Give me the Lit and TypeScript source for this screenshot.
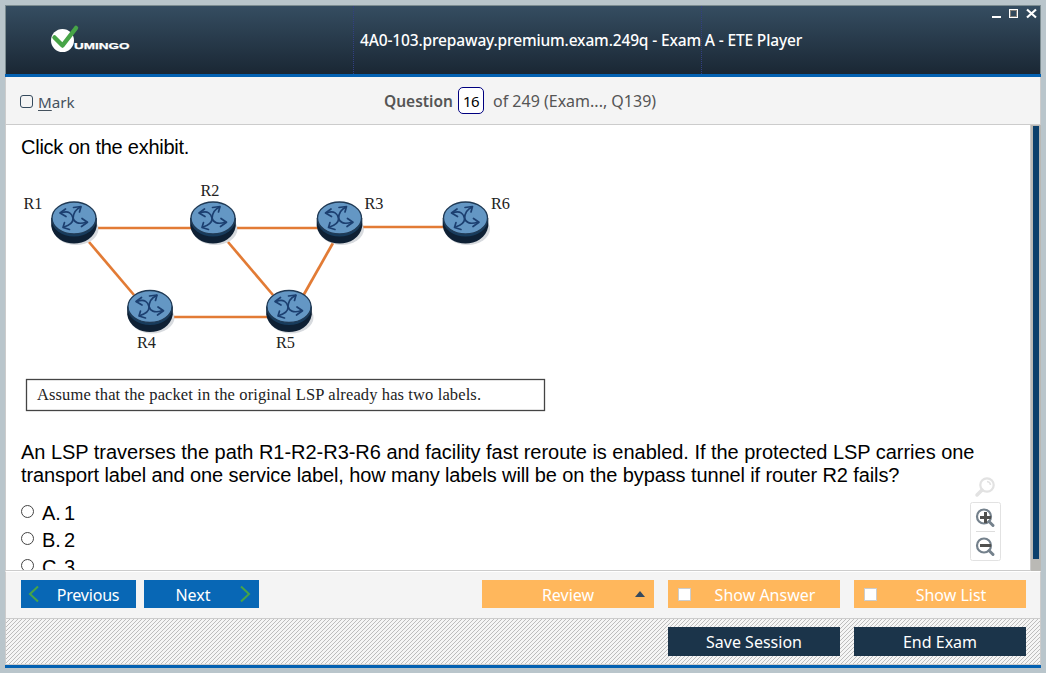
import { LitElement, html, svg, css } from "lit";
import { customElement } from "lit/decorators.js";

const routers = [
  { name: "R1", x: 74, y: 218, lx: 23.5, ly: 209 },
  { name: "R2", x: 213, y: 218, lx: 200.5, ly: 196 },
  { name: "R3", x: 339.5, y: 218, lx: 364.5, ly: 209 },
  { name: "R6", x: 465.5, y: 218, lx: 491, ly: 209 },
  { name: "R4", x: 150, y: 306.5, lx: 137, ly: 348 },
  { name: "R5", x: 289, y: 306.5, lx: 276, ly: 348 },
];

const links = [
  [98, 228, 192, 228],
  [237, 228, 318, 228],
  [363, 227, 444, 227],
  [89, 242, 134, 295],
  [228, 242, 273, 295],
  [333, 243, 303, 296],
  [174, 317, 268, 317],
];

const options = [
  { key: "A.", value: "1" },
  { key: "B.", value: "2" },
  { key: "C.", value: "3" },
];

@customElement("exam-exhibit")
class ExamExhibit extends LitElement {
  static styles = css`
    :host { display: block; height: 282px; }
    svg { display: block; }
    .label { font: 16.500px "Liberation Serif", serif; fill: #222; }
    .note { font: 16.500px "Liberation Serif", serif; fill: #222; }
    .link { stroke: #e27b35; stroke-width: 2.7; }
  `;

  router(r: { name: string; x: number; y: number; lx: number; ly: number }) {
    return svg`
      <g transform="translate(${r.x} ${r.y})">
        <ellipse cx="2" cy="11" rx="22.5" ry="16" fill="#bcc1c8" opacity=".6"></ellipse>
        <path d="M-22.800 0V8C-21 20-10 25.500 0 25.500S21 20 22.800 8V0Z" fill="#0e2034"></path>
        <ellipse cx="0" cy="1.500" rx="22.500" ry="17" fill="#173b5c"></ellipse>
        <ellipse cx="0" cy="0" rx="22" ry="16" fill="#6497c4" stroke="#203a55" stroke-width="1.3"></ellipse>
        <g fill="none" stroke="#1c3f70" stroke-width="1.7" stroke-linecap="round" stroke-linejoin="round">
          <path d="M-13-5C-5-8-2-4-1 0S4 7 12.500 4"></path>
          <path d="M6.500-11C0-8-1-3-1 1S-4 7-10 9"></path>
          <path d="M-8.500-9L-14-5L-8-1.500M-.500-10.500L7-11.500L5.500-6M8 .500L13.500 4.300L7.500 8.500M-9.500 4.500L-11 9.500L-4.500 11.500"></path>
        </g>
      </g>
      <text class="label" x=${r.lx} y=${r.ly} textLength="19" lengthAdjust="spacingAndGlyphs">${r.name}</text>`;
  }

  render() {
    return html`<svg width="540" height="282" viewBox="21 159 540 282">
      ${links.map(([a, b, c, d]) => svg`<line class="link" x1=${a} y1=${b} x2=${c} y2=${d}></line>`)}
      ${routers.map((r) => this.router(r))}
      <rect x="26.500" y="379.500" width="518" height="31" fill="#fff" stroke="#444" stroke-width="1.3"></rect>
      <text class="note" x="37" y="400" textLength="444">Assume that the packet in the original LSP already has two labels.</text>
    </svg>`;
  }
}

@customElement("app-root")
class AppRoot extends LitElement {
  static styles = css`
    :host { display: block; box-sizing: border-box; height: 673px; padding: 5px; background: #b9c5cb; font-family: "Noto Sans", sans-serif; overflow: hidden; }
    * { box-sizing: border-box; }
    .window { width: 1036px; height: 663px; display: flex; flex-direction: column; background: #fff; }
    .header { position: relative; height: 69px; border: 1px solid #7c8c91; border-bottom: 0; background: linear-gradient(#354d61, #1a2734); display: grid; grid-template-columns: 348px 348px 1fr; }
    .cell { border-right: 1px dotted #323f83; }
    .cell:last-child, .last { border: 0; }
    .logo { display: block; margin: 18px 0 0 42px; }
    .brand { font: bold 9.800px "Liberation Sans", sans-serif; fill: #fff; stroke: #fff; stroke-width: .25; }
    .title { position: absolute; left: 354px; top: 22px; line-height: 24px; font-size: 15.500px; letter-spacing: -.145px; color: #fff; white-space: nowrap; font-weight: 500; }
    .controls { position: absolute; right: 2px; top: 2px; }
    .rule { height: 3px; background: #0361b2; flex: none; }
    .topbar { height: 48px; background: #f4f4f4; border: 1px solid #ccc; border-top: 0; display: flex; align-items: center; color: #555; font-size: 16px; white-space: nowrap; }
    .check { width: 13px; height: 13px; border: 1px solid #34495c; border-radius: 3px; margin: 2px 5px 0 14px; }
    .mark { width: 346px; color: #44515d; font-size: 15.200px; padding-top: 3px; }
    .mark u { text-underline-offset: 2px; text-decoration-thickness: 1px; }
    .question { font-weight: 600; font-size: 15.500px; width: 74px; }
    .number { width: 26px; height: 27px; border: 1px solid #000080; border-radius: 5px; background: #fff; color: #000; font-size: 15px; letter-spacing: -.5px; text-align: center; line-height: 27px; margin-right: 9px; }
    .body { position: relative; height: 446px; display: flex; border-left: 1px solid #ccc; border-bottom: 1px solid #ccc; }
    .content { flex: 1; height: 445px; overflow: hidden; padding: 11px 0 0 15px; font: 20px/23px "Liberation Sans", Arial, sans-serif; color: #000; white-space: nowrap; }
    .line { height: 23px; }
    .intro { letter-spacing: -.25px; }
    .l1 { letter-spacing: -.028px; }
    .l2 { letter-spacing: -.107px; }
    .options { padding-top: 12px; }
    .option { display: flex; height: 27px; line-height: 28px; align-items: center; }
    .radio { width: 13px; height: 13px; border: 1px solid #444; border-radius: 50%; margin: 0 8px 3px 0; }
    .key { width: 22px; }
    .scroll { width: 11px; height: 446px; background: #bab9b5; border-left: 1px solid #ccc; padding: 1px 2px 0; }
    .thumb { height: 433px; background: #0c406c; }
    .tools { position: absolute; left: 964px; top: 350px; }
    .actions { height: 48px; border: 1px solid #ccc; border-top: 1px solid #fff; background: #f4f4f4; display: flex; padding: 8px 14px 0 15px; }
    .btn { height: 28px; padding-top: 2px; line-height: 28px; color: #fff; font-size: 16px; text-align: center; position: relative; display: flex; align-items: center; justify-content: center; white-space: nowrap; }
    .nav { width: 115px; background: #0867b5; margin-right: 8px; }
    .prev { padding-left: 19px; letter-spacing: -.2px; }
    .next { padding-right: 17px; }
    .chev { position: absolute; top: 5px; }
    .prev .chev { left: 7px; }
    .next .chev { right: 8px; }
    .wide { width: 172px; background: #ffb75c; margin-left: 14px; }
    .review { margin-left: auto; }
    .box { position: absolute; left: 10px; top: 8px; width: 13px; height: 13px; background: #fff; border: 1px solid #ccc; }
    .tri { position: absolute; right: 9px; top: 11px; border: 5px solid transparent; border-top: 0; border-bottom: 6px solid #34495e; }
    .shift { padding-left: 22px; }
    .bottom { height: 46px; border-left: 1px solid #ccc; border-right: 1px solid #ccc; border-bottom: 1px solid #ccc; background: linear-gradient(135deg, #f5f5f5 44%, #bdbdbd 44% 56%, #f5f5f5 56%) 0 0 / 4px 4px; display: flex; justify-content: flex-end; padding: 8px 14px 0; }
    .dark { height: 29px; background: #1b344a; padding-top: 1px; }
  `;

  render() {
    return html`<div class="window">
      <div class="header">
        <div class="cell">
          <svg class="logo" width="90" height="32" viewBox="48 24 90 32">
            <circle cx="62.500" cy="40.500" r="11.500" fill="#fff"></circle>
            <path d="M54.500 37.500L62.500 45.500L76 28" fill="none" stroke="#47a447" stroke-width="4.500" stroke-linecap="round" stroke-linejoin="round"></path>
            <text class="brand" x="74" y="49" textLength="55.500" lengthAdjust="spacingAndGlyphs">UMINGO</text>
          </svg>
        </div>
        <div class="cell"></div>
        <div class="cell last"></div>
        <div class="title">4A0-103.prepaway.premium.exam.249q - Exam A - ETE Player</div>
        <svg class="controls" width="46" height="12" viewBox="0 0 46 12">
          <path d="M0 9H9" stroke="#fff" stroke-width="2"></path>
          <rect x="17.500" y="1.500" width="8" height="8" fill="none" stroke="#fff"></rect>
          <rect x="18.500" y="2.500" width="6" height="6" fill="none" stroke="#84807a"></rect>
          <path d="M35 1.500L44 9.500M44 1.500L35 9.500" stroke="#fff" stroke-width="2.200"></path>
        </svg>
      </div>
      <div class="rule"></div>
      <div class="topbar">
        <span class="check"></span><span class="mark"><u>M</u>ark</span>
        <span class="question">Question</span><span class="number">16</span>
        <span class="total">of 249 (Exam..., Q139)</span>
      </div>
      <div class="body">
        <div class="content">
          <div class="line"><span class="intro">Click on the exhibit.</span></div>
          <exam-exhibit></exam-exhibit>
          <div class="line"><span class="l1">An LSP traverses the path R1-R2-R3-R6 and facility fast reroute is enabled. If the protected LSP carries one</span></div>
          <div class="line"><span class="l2">transport label and one service label, how many labels will be on the bypass tunnel if router R2 fails?</span></div>
          <div class="options">
            ${options.map((o) => html`<div class="option"><span class="radio"></span><span class="key">${o.key}</span><span>${o.value}</span></div>`)}
          </div>
        </div>
        <div class="scroll"><div class="thumb"></div></div>
        <svg class="tools" width="32" height="88" viewBox="970 475 32 88">
          <g fill="none" stroke="#e2e2e2">
            <circle cx="987" cy="485" r="6.700" stroke-width="2.200"></circle>
            <path d="M987 481.500A4 4 0 0 1 990.500 485" stroke-width="1.500"></path>
            <path d="M982 490L977 495" stroke-width="3.500" stroke-linecap="round"></path>
          </g>
          <rect x="970.500" y="502.500" width="30" height="58" rx="2" fill="#fff" stroke="#e2e2e2"></rect>
          <path d="M976 531.500H995" stroke="#ddd"></path>
          <g fill="none" stroke="#74818c">
            <circle cx="984" cy="516.500" r="7" stroke-width="2.200"></circle>
            <path d="M989 521.500L993 525.500" stroke-width="3" stroke-linecap="round"></path>
            <circle cx="984" cy="545.500" r="7" stroke-width="2.200"></circle>
            <path d="M989 550.500L993 554.500" stroke-width="3" stroke-linecap="round"></path>
          </g>
          <path d="M980 517.500H991M985.500 512V523M980 545.500H991" stroke="#50504e" stroke-width="3"></path>
        </svg>
      </div>
      <div class="actions">
        <div class="btn nav prev"><svg class="chev" width="12" height="18" viewBox="0 0 12 18"><path d="M10 1.500L2 9L10 16.500" fill="none" stroke="#47a447" stroke-width="2"></path></svg><span>Previous</span></div>
        <div class="btn nav next"><span>Next</span><svg class="chev" width="12" height="18" viewBox="0 0 12 18"><path d="M2 1.500L10 9L2 16.500" fill="none" stroke="#47a447" stroke-width="2"></path></svg></div>
        <div class="btn wide review"><span>Review</span><span class="tri"></span></div>
        <div class="btn wide shift"><span class="box"></span><span>Show Answer</span></div>
        <div class="btn wide shift"><span class="box"></span><span>Show List</span></div>
      </div>
      <div class="bottom">
        <div class="btn wide dark"><span>Save Session</span></div>
        <div class="btn wide dark"><span>End Exam</span></div>
      </div>
      <div class="rule"></div>
    </div>`;
  }
}
